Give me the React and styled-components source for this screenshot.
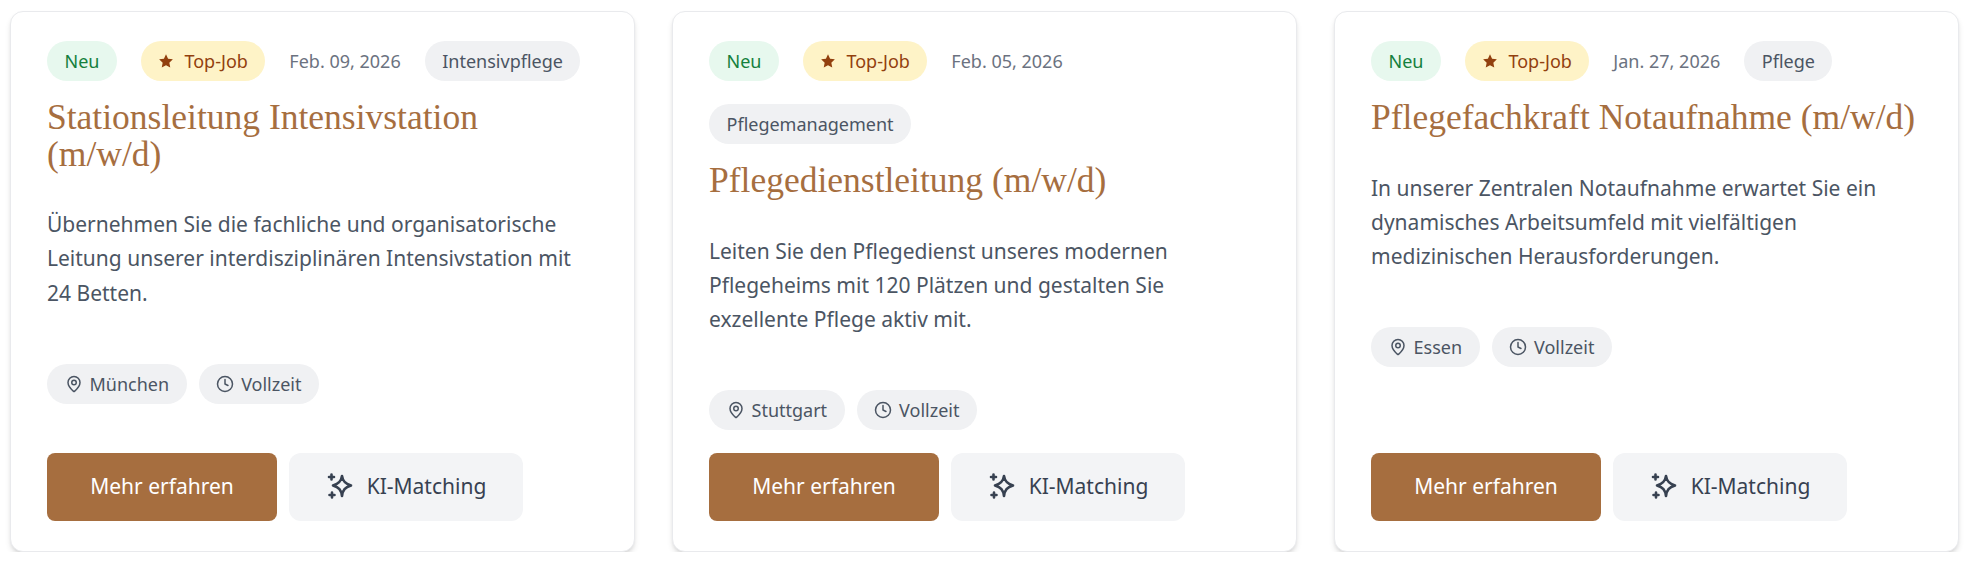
import React from 'react'
import styled, { createGlobalStyle } from 'styled-components'
import { MapPin, Clock } from 'lucide-react'

const GlobalStyle = createGlobalStyle`
  body {
    margin: 0;
    background: #fff;
    font-family: "Noto Sans", sans-serif;
  }
`

const Grid = styled.div`
  display: grid;
  grid-template-columns: repeat(3, 625px);
  column-gap: 37px;
  padding: 11px 0 0 10px;
`
const Card = styled.article`
  display: flex;
  flex-direction: column;
  box-sizing: border-box;
  height: 541px;
  padding: 29px 36px 30px;
  background: #fff;
  border: 1px solid #e9eaed;
  border-radius: 13px;
  box-shadow: 0 4px 6px -1px rgba(0, 0, 0, 0.12), 0 2px 4px -2px rgba(0, 0, 0, 0.12);
`
const TopRow = styled.div`
  display: flex;
  flex-wrap: wrap;
  align-items: center;
  gap: 23px 24px;
  margin-bottom: 18px;
`
const Pill = styled.span`
  display: inline-flex;
  align-items: center;
  gap: ${p => p.$gap || 8}px;
  height: 40px;
  padding: 0 17.5px;
  border-radius: 20px;
  font-size: 18px;
  background: ${p => p.$bg || '#f0f1f3'};
  color: ${p => p.$color || '#4b5563'};
`
const DateText = styled.span`
  font-size: 18px;
  color: #6b7280;
`
const Title = styled.h3`
  margin: 0 0 35px;
  font-family: "Liberation Serif", serif;
  font-weight: 400;
  font-size: 35.5px;
  line-height: 36.5px;
  color: #a66e3f;
`
const Desc = styled.p`
  margin: 0 0 54px;
  font-size: 21px;
  line-height: 34.3px;
  color: #4b5563;
`
const MetaRow = styled.div`
  display: flex;
  gap: 12px;
`
const Actions = styled.div`
  display: flex;
  gap: 12px;
  margin-top: auto;
`
const PrimaryButton = styled.button`
  width: 230px;
  height: 68px;
  padding: 0 0 2px;
  border: 0;
  border-radius: 8px;
  background: #a66e3f;
  color: #fff;
  font: 400 21px "Noto Sans", sans-serif;
`
const SecondaryButton = styled.button`
  display: inline-flex;
  align-items: center;
  justify-content: center;
  gap: 13px;
  width: 234px;
  height: 68px;
  padding: 0 0 2px;
  border: 0;
  border-radius: 12px;
  background: #f3f4f6;
  color: #374151;
  font: 400 21px "Noto Sans", sans-serif;
`

function StarIcon() {
  return (
    <svg width="16" height="16" viewBox="0 0 24 24" fill="#92400e">
      <path d="M12 2l3.100 6.600 7.200.9-5.300 5 1.400 7.200L12 18.200l-6.400 3.500L7 14.500l-5.300-5 7.200-.9z" />
    </svg>
  )
}

function SparkleIcon() {
  return (
    <svg width="28" height="28" viewBox="0 0 28 28" fill="none" stroke="#374151" strokeWidth="2.6" strokeLinejoin="round" strokeLinecap="round">
      <path d="M16 4c.8 5.200 3 7.600 9 9.500-6 1.900-8.200 4.300-9 10.500-.8-6.200-3-8.600-9-10.500 6-1.900 8.200-4.300 9-9.500z" />
      <path d="M5.500 2.500v5M3 5h5M6 20.500v5M3.500 23h5" />
    </svg>
  )
}

const jobs = [
  { date: 'Feb. 09, 2026', cat: 'Intensivpflege', title: 'Stationsleitung Intensivstation (m/w/d)', desc: 'Übernehmen Sie die fachliche und organisatorische Leitung unserer interdisziplinären Intensivstation mit 24 Betten.', city: 'München' },
  { date: 'Feb. 05, 2026', cat: 'Pflegemanagement', title: 'Pflegedienstleitung (m/w/d)', desc: 'Leiten Sie den Pflegedienst unseres modernen Pflegeheims mit 120 Plätzen und gestalten Sie exzellente Pflege aktiv mit.', city: 'Stuttgart' },
  { date: 'Jan. 27, 2026', cat: 'Pflege', title: 'Pflegefachkraft Notaufnahme (m/w/d)', desc: 'In unserer Zentralen Notaufnahme erwartet Sie ein dynamisches Arbeitsumfeld mit vielfältigen medizinischen Herausforderungen.', city: 'Essen' },
]

export default function App() {
  return (
    <>
      <GlobalStyle />
      <Grid>
        {jobs.map(job => (
          <Card key={job.title}>
            <TopRow>
              <Pill $bg="#e7f8ee" $color="#15803d">Neu</Pill>
              <Pill $bg="#fef3c7" $color="#92400e" $gap={10}><StarIcon />Top-Job</Pill>
              <DateText>{job.date}</DateText>
              <Pill>{job.cat}</Pill>
            </TopRow>
            <Title>{job.title}</Title>
            <Desc>{job.desc}</Desc>
            <MetaRow>
              <Pill $gap={7}><MapPin size={18} />{job.city}</Pill>
              <Pill $gap={7}><Clock size={18} />Vollzeit</Pill>
            </MetaRow>
            <Actions>
              <PrimaryButton>Mehr erfahren</PrimaryButton>
              <SecondaryButton><SparkleIcon />KI-Matching</SecondaryButton>
            </Actions>
          </Card>
        ))}
      </Grid>
    </>
  )
}
